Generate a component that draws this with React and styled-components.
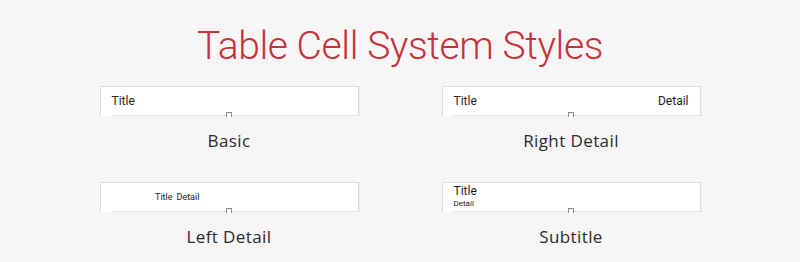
import React from "react";
import styled, { createGlobalStyle } from "styled-components";

const Global = createGlobalStyle`
  html, body {
    margin: 0;
    padding: 0;
    background: #f7f5f6;
  }
`;

const Page = styled.div`
  width: 800px;
  height: 262px;
  background: #f7f5f6;
  display: flex;
  flex-direction: column;
  align-items: center;
  overflow: hidden;
`;

const Heading = styled.h1`
  margin: 23px 0 0 0;
  font-family: Roboto, "Liberation Sans", sans-serif;
  font-weight: 300;
  font-size: 39px;
  line-height: 47px;
  color: #c4343c;
  letter-spacing: -0.4px;
`;

const Grid = styled.div`
  display: grid;
  grid-template-columns: 259px 259px;
  column-gap: 83px;
  row-gap: 31px;
  margin-top: 16px;
`;

const Item = styled.div`
  display: flex;
  flex-direction: column;
  align-items: center;
`;

const Cell = styled.div`
  position: relative;
  box-sizing: border-box;
  width: 100%;
  height: 30px;
  background: #fff;
  border: 1px solid #dcdcdc;
  border-bottom: none;
  box-shadow: 1px 0 0 #ececec;
  display: flex;
  flex-direction: ${(p) => (p.stacked ? "column" : "row")};
  justify-content: ${(p) => (p.stacked ? "center" : "flex-start")};
  align-items: ${(p) => (p.stacked ? "flex-start" : "center")};
  padding: ${(p) => (p.stacked ? "2px 11px 4px" : "0 11px 2px")};
  font-family: Roboto, "Liberation Sans", sans-serif;
  color: #1e1e1e;

  &::after {
    content: "";
    position: absolute;
    left: 10px;
    right: 0;
    bottom: 0;
    height: 1px;
    background: #e6e6e6;
  }
`;

const Handle = styled.span`
  position: absolute;
  left: 50%;
  bottom: -1px;
  width: 4px;
  height: 4px;
  margin-left: -3px;
  border: 1px solid #8a8a8a;
  border-bottom: none;
  background: #fff;
  z-index: 1;
`;

const Title = styled.span`
  font-size: ${(p) => p.size || 12}px;
  line-height: 14px;
`;

const Detail = styled.span`
  font-size: ${(p) => p.size || 12}px;
  line-height: 12px;
  margin-left: ${(p) => (p.right ? "auto" : p.gap || 0)};
  color: #222;
`;

const LeftTitle = styled.span`
  width: 61px;
  text-align: right;
  font-size: 9px;
`;

const Label = styled.div`
  margin-top: 15px;
  font-family: "Open Sans", "DejaVu Sans", sans-serif;
  font-size: 17px;
  line-height: 20px;
  color: #2b2b2b;
  letter-spacing: 0.4px;
`;

export default function App() {
  return (
    <Page>
      <Global />
      <Heading>Table Cell System Styles</Heading>
      <Grid>
        <Item>
          <Cell>
            <Title>Title</Title>
            <Handle />
          </Cell>
          <Label>Basic</Label>
        </Item>
        <Item>
          <Cell>
            <Title>Title</Title>
            <Detail right>Detail</Detail>
            <Handle />
          </Cell>
          <Label>Right Detail</Label>
        </Item>
        <Item>
          <Cell>
            <LeftTitle>Title</LeftTitle>
            <Detail size={9} gap="4px">Detail</Detail>
            <Handle />
          </Cell>
          <Label>Left Detail</Label>
        </Item>
        <Item>
          <Cell stacked>
            <Title>Title</Title>
            <Detail size={8}>Detail</Detail>
            <Handle />
          </Cell>
          <Label>Subtitle</Label>
        </Item>
      </Grid>
    </Page>
  );
}
